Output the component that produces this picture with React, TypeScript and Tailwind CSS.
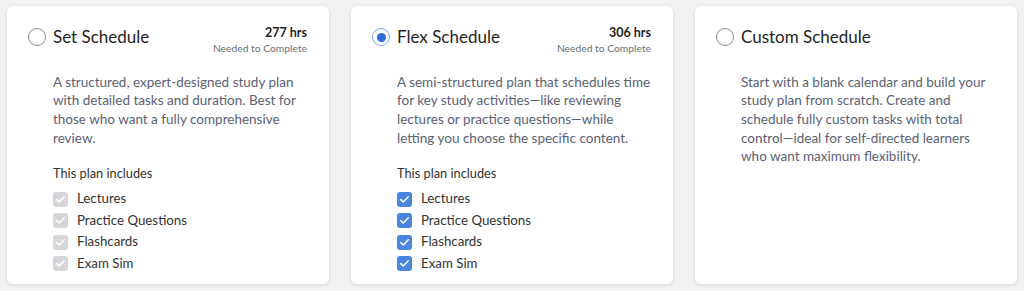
type Plan = {
  title: string
  hours?: string
  description: string
  selected?: boolean
  includes?: boolean
}

const plans: Plan[] = [
  {
    title: 'Set Schedule',
    hours: '277 hrs',
    description:
      'A structured, expert-designed study plan with detailed tasks and duration. Best for those who want a fully comprehensive review.',
    includes: true,
  },
  {
    title: 'Flex Schedule',
    hours: '306 hrs',
    description:
      'A semi-structured plan that schedules time for key study activities—like reviewing lectures or practice questions—while letting you choose the specific content.',
    selected: true,
    includes: true,
  },
  {
    title: 'Custom Schedule',
    description:
      'Start with a blank calendar and build your study plan from scratch. Create and schedule fully custom tasks with total control—ideal for self-directed learners who want maximum flexibility.',
  },
]

const features = ['Lectures', 'Practice Questions', 'Flashcards', 'Exam Sim']

function Radio({ checked }: { checked?: boolean }) {
  if (checked) {
    return (
      <span className="flex h-[18px] w-[18px] shrink-0 items-center justify-center rounded-full border-[1.5px] border-[#7ea9ea] bg-white">
        <span className="h-[9px] w-[9px] rounded-full bg-[#2f6fd8]" />
      </span>
    )
  }
  return <span className="h-[18px] w-[18px] shrink-0 rounded-full border-[1.5px] border-[#8c8c8c] bg-white" />
}

function Checkbox({ active }: { active?: boolean }) {
  return (
    <span
      className={
        active
          ? 'flex h-[15px] w-[15px] shrink-0 items-center justify-center rounded-[3px] bg-[#4a86df]'
          : 'flex h-[15px] w-[15px] shrink-0 items-center justify-center rounded-[3px] bg-[#d4d6da]'
      }
    >
      <svg width="15" height="15" viewBox="0 0 15 15" fill="none">
        <path d="M3.8 7.6 L6.3 10 L11.3 4.8" stroke="white" strokeWidth="1.5" strokeLinecap="round" strokeLinejoin="round" />
      </svg>
    </span>
  )
}

function PlanCard({ plan }: { plan: Plan }) {
  return (
    <div className="h-[278px] w-[322px] shrink-0 rounded-[6px] bg-white pl-[21px] pr-[22px] pt-[19px] shadow-[0_1px_4px_rgba(0,0,0,0.12)]">
      <div className="flex items-start justify-between">
        <div className="flex h-[24px] items-center gap-[7px]">
          <Radio checked={plan.selected} />
          <span className="text-[17px] leading-[24px] text-[#1f1f1f]">{plan.title}</span>
        </div>
        {plan.hours && (
          <div className="text-right">
            <div className="text-[12.5px] font-bold leading-[16px] text-[#1f1f1f]">{plan.hours}</div>
            <div className="text-[10.3px] leading-[14px] text-[#6b6f7a]">Needed to Complete</div>
          </div>
        )}
      </div>
      <div className={plan.hours ? 'pl-[25px] pt-[17.5px]' : 'pl-[25px] pt-[23.5px]'}>
        <p className="text-[13.5px] leading-[18.7px] text-[#5b6173]">{plan.description}</p>
        {plan.includes && (
          <>
            <div className="mt-[17px] text-[12.8px] leading-[18px] text-[#333333]">This plan includes</div>
            <ul className="mt-[6px]">
              {features.map((f) => (
                <li key={f} className="flex h-[21.5px] items-center gap-[9px]">
                  <Checkbox active={plan.selected} />
                  <span className="text-[13.3px] leading-[21.5px] text-[#333333]">{f}</span>
                </li>
              ))}
            </ul>
          </>
        )}
      </div>
    </div>
  )
}

export default function App() {
  return (
    <div className="flex h-[291px] gap-[22px] bg-[#f2f2f2] px-[7px] pt-[6px] font-['Lato',sans-serif]">
      {plans.map((p) => (
        <PlanCard key={p.title} plan={p} />
      ))}
    </div>
  )
}
